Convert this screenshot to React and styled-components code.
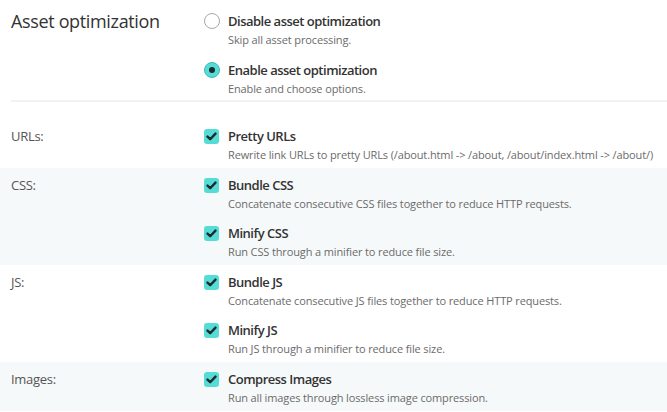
import React from "react";
import styled, { createGlobalStyle } from "styled-components";

const Global = createGlobalStyle`
  html, body { margin: 0; padding: 0; background: #fff; }
  body { font-family: "Open Sans", "Noto Sans", sans-serif; color: #333; }
`;

const Page = styled.div`
  width: 667px;
  height: 412px;
  overflow: hidden;
  background: #fff;
`;

const Header = styled.section`
  display: grid;
  grid-template-columns: 193px 1fr;
  margin-left: 11px;
  padding: 11px 0 3px 0;
  border-bottom: 2px solid #f1f3f3;
`;

const Heading = styled.h2`
  margin: 0;
  font-size: 18px;
  line-height: 20px;
  font-weight: 400;
  letter-spacing: -0.35px;
  color: #333;
`;

const Options = styled.div`
  display: flex;
  flex-direction: column;
  gap: 12px;
`;

const Option = styled.label`
  display: grid;
  grid-template-columns: 24px 1fr;
  align-items: start;
`;

const Radio = styled.span`
  width: 16px;
  height: 16px;
  margin-top: 2px;
  box-sizing: border-box;
  border-radius: 50%;
  border: 1px solid ${(p) => (p.$checked ? "#3cbcb8" : "#a8a8a8")};
  background: ${(p) => (p.$checked ? "#55dcd6" : "#fff")};
  display: flex;
  align-items: center;
  justify-content: center;
  &::after {
    content: "";
    display: ${(p) => (p.$checked ? "block" : "none")};
    width: 6px;
    height: 6px;
    border-radius: 50%;
    background: #1d2b2d;
  }
`;

const Check = styled.span`
  width: 15px;
  height: 15px;
  margin-top: 3px;
  border-radius: 3px;
  background: #55dcd6;
  display: flex;
  align-items: center;
  justify-content: center;
`;

const Text = styled.div`
  display: flex;
  flex-direction: column;
`;

const Title = styled.div`
  font-size: 13px;
  line-height: 20px;
  font-weight: 600;
  letter-spacing: -0.5px;
  color: #333;
`;

const Desc = styled.div`
  font-size: 11px;
  line-height: 17px;
  letter-spacing: -0.13px;
  color: #6b6b6b;
`;

const Groups = styled.div`
  margin-top: 17px;
  display: flex;
  flex-direction: column;
`;

const Group = styled.section`
  display: grid;
  grid-template-columns: 193px 1fr;
  padding: 7px 0 5px 11px;
  background: ${(p) => (p.$shaded ? "#f6f9f9" : "#fff")};
`;

const GroupLabel = styled.div`
  font-size: 13px;
  line-height: 20px;
  letter-spacing: -0.3px;
  color: #555;
`;

const Items = styled.div`
  display: flex;
  flex-direction: column;
  gap: 11px;
`;

const CheckMark = () => (
  <svg width="11" height="9" viewBox="0 0 11 9">
    <path d="M1.5 4.6 L4.2 7.2 L9.5 1.6" fill="none" stroke="#1d2b2d" strokeWidth="2.4" strokeLinecap="round" strokeLinejoin="round" />
  </svg>
);

const groups = [
  { label: "URLs:", items: [["Pretty URLs", "Rewrite link URLs to pretty URLs (/about.html -> /about, /about/index.html -> /about/)"]] },
  {
    label: "CSS:",
    items: [
      ["Bundle CSS", "Concatenate consecutive CSS files together to reduce HTTP requests."],
      ["Minify CSS", "Run CSS through a minifier to reduce file size."],
    ],
  },
  {
    label: "JS:",
    items: [
      ["Bundle JS", "Concatenate consecutive JS files together to reduce HTTP requests."],
      ["Minify JS", "Run JS through a minifier to reduce file size."],
    ],
  },
  { label: "Images:", items: [["Compress Images", "Run all images through lossless image compression."]] },
];

export default function App() {
  return (
    <Page>
      <Global />
      <Header>
        <Heading>Asset optimization</Heading>
        <Options>
          <Option>
            <Radio />
            <Text>
              <Title>Disable asset optimization</Title>
              <Desc>Skip all asset processing.</Desc>
            </Text>
          </Option>
          <Option>
            <Radio $checked />
            <Text>
              <Title>Enable asset optimization</Title>
              <Desc>Enable and choose options.</Desc>
            </Text>
          </Option>
        </Options>
      </Header>
      <Groups>
        {groups.map((g, i) => (
          <Group key={g.label} $shaded={i % 2 === 1}>
            <GroupLabel>{g.label}</GroupLabel>
            <Items>
              {g.items.map(([t, d]) => (
                <Option key={t}>
                  <Check>
                    <CheckMark />
                  </Check>
                  <Text>
                    <Title>{t}</Title>
                    <Desc>{d}</Desc>
                  </Text>
                </Option>
              ))}
            </Items>
          </Group>
        ))}
      </Groups>
    </Page>
  );
}
